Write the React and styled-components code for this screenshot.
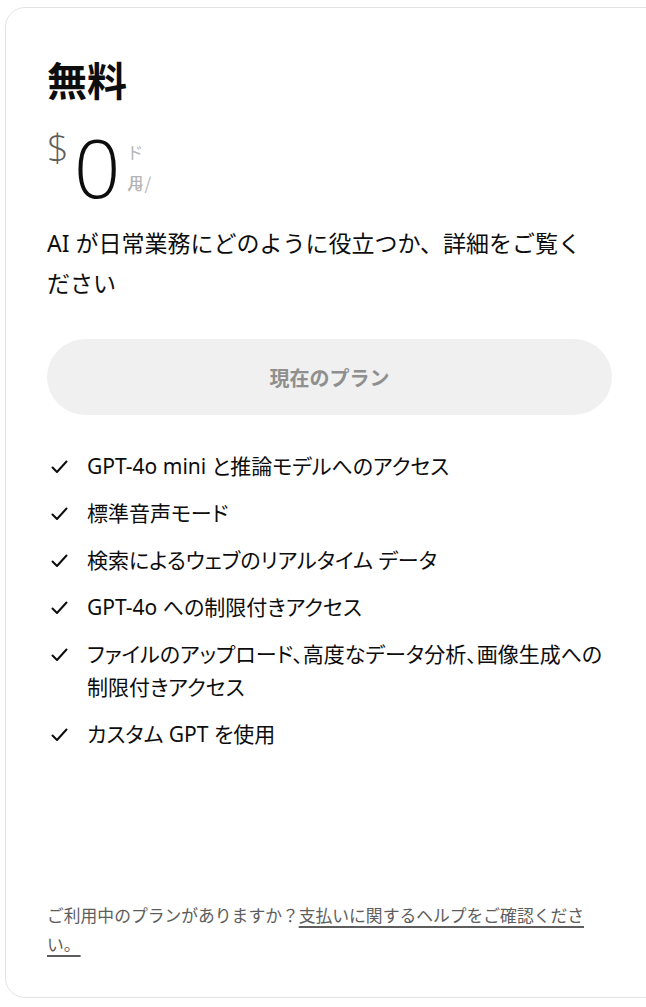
import React from "react";
import styled, { createGlobalStyle } from "styled-components";

const Global = createGlobalStyle`
  html, body { margin: 0; padding: 0; background: #ffffff; overflow: hidden; }
  body { font-family: "Noto Sans", "Noto Sans CJK JP", sans-serif; color: #0d0d0d; }
`;

const Card = styled.section`
  box-sizing: border-box;
  margin: 7px 0 0 5px;
  width: 660px;
  height: 991px;
  border: 1px solid #e3e3e3;
  border-radius: 20px;
  padding: 46px 40px 38px 41px;
  display: flex;
  flex-direction: column;
`;

const Content = styled.div`
  width: 565px;
  display: flex;
  flex-direction: column;
  flex: 1;
`;

const Title = styled.h2`
  margin: 0;
  font-size: 40px;
  line-height: 50px;
  font-weight: 700;
  font-family: "Noto Sans CJK JP", sans-serif;
`;

const PriceRow = styled.div`
  display: flex;
  align-items: flex-start;
  margin-top: 22px;
  height: 80px;
`;

const Currency = styled.span`
  font-family: "Open Sans", sans-serif;
  font-size: 38px;
  line-height: 40px;
  font-weight: 300;
  color: #5d5d5d;
  margin-top: 1px;
`;

const Amount = styled.span`
  font-family: "Open Sans", sans-serif;
  font-size: 82px;
  line-height: 80px;
  font-weight: 300;
  color: #0d0d0d;
  margin-left: 5px;
`;

const Unit = styled.span`
  display: flex;
  flex-direction: column;
  margin-left: 6px;
  margin-top: 10px;
  font-family: "Noto Sans CJK JP", sans-serif;
  font-size: 17px;
  line-height: 31px;
  color: #b4b4b4;
`;

const Overlap = styled.span`
  margin-right: -16px;
`;

const Description = styled.p`
  margin: 17px 0 0;
  max-width: 548px;
  font-size: 23px;
  line-height: 40px;
  font-family: "Noto Sans", "Noto Sans CJK JP", sans-serif;
  color: #0d0d0d;
`;

const PlanButton = styled.button`
  margin-top: 36px;
  height: 76px;
  width: 100%;
  border: none;
  border-radius: 38px;
  background: #f0f0f0;
  color: #8f8f8f;
  font-family: "Noto Sans CJK JP", sans-serif;
  font-size: 20px;
  font-weight: 600;
  cursor: default;
`;

const FeatureList = styled.ul`
  list-style: none;
  margin: 35px 0 0;
  padding: 0;
  display: flex;
  flex-direction: column;
  gap: 14px;
`;

const Feature = styled.li`
  display: flex;
  align-items: flex-start;
  gap: 15px;
  font-size: 21px;
  line-height: 33px;
  font-family: "Noto Sans", "Noto Sans CJK JP", sans-serif;
  font-feature-settings: "palt";
  color: #0d0d0d;
`;

const CheckBox = styled.span`
  flex: none;
  width: 21px;
  height: 33px;
  display: flex;
  align-items: center;
  padding-left: 4px;
`;

const FeatureText = styled.span`
  max-width: 525px;
`;

const Footer = styled.p`
  margin: auto 0 0;
  max-width: 548px;
  font-size: 16.8px;
  line-height: 29px;
  color: #5d5d5d;
  font-family: "Noto Sans", "Noto Sans CJK JP", sans-serif;
`;

const HelpLink = styled.a`
  color: #5d5d5d;
  text-decoration: underline;
  text-underline-offset: 4px;
  text-decoration-thickness: 2px;
`;

const Check = () => (
  <svg width="17" height="14" viewBox="0 0 17 14" fill="none">
    <path d="M1.5 7.5 L6 12 L15.5 1.5" stroke="#0d0d0d" strokeWidth="2" strokeLinecap="round" strokeLinejoin="round" />
  </svg>
);

const features = [
  "GPT-4o mini と推論モデルへのアクセス",
  "標準音声モード",
  "検索によるウェブのリアルタイム データ",
  "GPT-4o への制限付きアクセス",
  "ファイルのアップロード、高度なデータ分析、画像生成への制限付きアクセス",
  "カスタム GPT を使用",
];

export default function App() {
  return (
    <>
      <Global />
      <Card>
        <Content>
          <Title>無料</Title>
          <PriceRow>
            <Currency>$</Currency>
            <Amount>0</Amount>
            <Unit>
              <span>ド</span>
              <span><Overlap>ル</Overlap>月/</span>
            </Unit>
          </PriceRow>
          <Description>AI が日常業務にどのように役立つか、詳細をご覧ください</Description>
          <PlanButton>現在のプラン</PlanButton>
          <FeatureList>
            {features.map((f) => (
              <Feature key={f}>
                <CheckBox><Check /></CheckBox>
                <FeatureText>{f}</FeatureText>
              </Feature>
            ))}
          </FeatureList>
          <Footer>
            ご利用中のプランがありますか？<HelpLink href="#">支払いに関するヘルプをご確認ください。</HelpLink>
          </Footer>
        </Content>
      </Card>
    </>
  );
}
